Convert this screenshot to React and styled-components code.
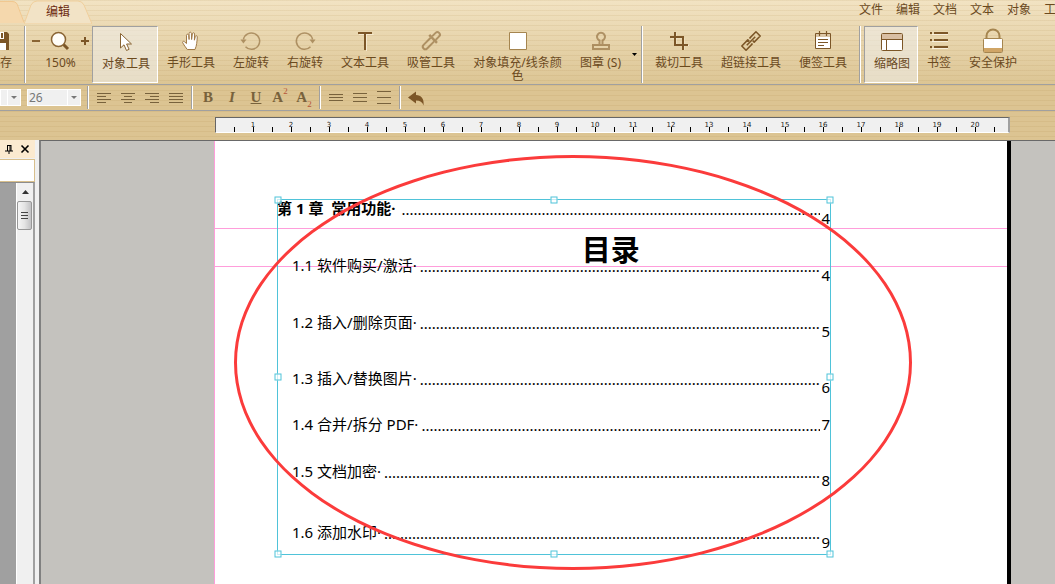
import React from "react";
import styled, { createGlobalStyle } from "styled-components";

const menus = ["文件", "编辑", "文档", "文本", "对象", "工具"];

const rulerMarks = Array.from({ length: 20 }, (_, i) => i + 1);

const dots = ".".repeat(400);

const contents = [
  { label: "第 1 章\u00a0 常用功能·", page: 4, height: 57, drop: 10, chapter: true },
  { label: "1.1 软件购买/激活·", page: 4, height: 57, drop: 10 },
  { label: "1.2 插入/删除页面·", page: 5, height: 56, drop: 9 },
  { label: "1.3 插入/替换图片·", page: 6, height: 46, drop: 9 },
  { label: "1.4 合并/拆分 PDF·", page: 7, height: 47, drop: 0 },
  { label: "1.5 文档加密·", page: 8, height: 61, drop: 9 },
  { label: "1.6 添加水印·", page: 9, height: 32, drop: 10 },
];

const alignments = [
  { name: "左对齐", d: "M0 .5h14M0 3.5h9M0 6.5h14M0 9.5h9" },
  { name: "居中", d: "M0 .5h14M3 3.5h8M0 6.5h14M3 9.5h8" },
  { name: "右对齐", d: "M0 .5h14M5 3.5h9M0 6.5h14M5 9.5h9" },
  { name: "两端对齐", d: "M0 .5h14M0 3.5h14M0 6.5h14M0 9.5h14" },
];

const spacings = [
  { name: "单倍行距", d: "M0 2.5h14M0 5.5h14M0 8.5h14" },
  { name: "1.5 倍行距", d: "M0 1.5h14M0 5.5h14M0 9.5h14" },
  { name: "双倍行距", d: "M0 -.5h14M0 5.5h14M0 11.5h14" },
];

const SaveIcon = () => (
  <Svg width="20" height="20">
    <path d="M1 1h16l2 2v16H1z" fill="#7c5627" />
    <path d="M5 1h9v7H5zM4 12h12v7H4z" fill="#fff" />
    <path d="M11 2h2v5h-2zM6 15h4v4H6z" fill="#7c5627" />
  </Svg>
);

const ZoomIcon = () => (
  <Svg width="20" height="20">
    <path d="M13 13l5 5" stroke="#7c5627" strokeWidth="3" />
    <circle cx="8.5" cy="8.5" r="7" fill="#fffdf8" stroke="#8a6534" strokeWidth="1.5" />
  </Svg>
);

const ArrowIcon = () => (
  <Svg width="20" height="20">
    <path
      d="M4.500 1.500v14.500l3.500-3.200 2.500 5.700 2.600-1.200-2.500-5.300h4.900z"
      fill="#fff"
      stroke="#8a6534"
    />
  </Svg>
);

const HandIcon = () => (
  <Svg width="20" height="20">
    <path
      d="M6.300 18.500C4.500 16.500 3 13.800 1.700 11.800c-.6-1.200.7-2 1.700-1.100L5.500 12.500V4.300c0-1.500 2-1.500 2.200 0l.4 4.200V2.300c0-1.600 2.200-1.600 2.300 0l.2 6.200.8-5.700c.2-1.500 2.200-1.300 2.200.2l-.2 6.200.9-3.700c.4-1.300 2-.9 2 .4-.3 4.300-.5 8.700-2.300 12.600z"
      fill="#fff"
      stroke="#a07a48"
    />
  </Svg>
);

const RotateIcon = ({ clockwise }) => (
  <Svg width="20" height="20" $faded>
    <g transform={clockwise ? undefined : "translate(20 0) scale(-1 1)"}>
      <path
        d="M17.600 8.500A8.200 8.200 0 1 0 15.500 15.800"
        fill="none"
        stroke="#8a6534"
        strokeWidth="1.500"
      />
      <path d="M14.500 8.500h6L17.600 12.500z" fill="#8a6534" />
    </g>
  </Svg>
);

const TextIcon = () => (
  <Svg width="20" height="20">
    <path d="M4 3.500h14.500M11.500 2v18" stroke="#f6ead0" />
    <path d="M3 2h14M10 2v17" stroke="#7c5627" strokeWidth="2" />
  </Svg>
);

const DropperIcon = () => (
  <Svg width="20" height="20" $faded>
    <g
      transform="rotate(45 10 10)"
      fill="none"
      stroke="#8a6534"
      strokeWidth="2"
      strokeLinejoin="round"
    >
      <path d="M7.500 6V1a2.500 2.500 0 0 1 5 0V6" />
      <path d="M4.500 7h11" strokeWidth="2.500" />
      <path d="M7.500 8v10a2.500 2.500 0 0 0 5 0V8" />
    </g>
  </Svg>
);

const FillIcon = () => (
  <Svg width="20" height="20">
    <path d="M1.500 1.500h17v17h-17z" fill="#fff" stroke="#a5854f" />
  </Svg>
);

const StampIcon = () => (
  <Svg width="20" height="20" $faded>
    <g fill="none" stroke="#8a6534" strokeWidth="2">
      <path d="M8.500 9.500a4 4 0 1 1 3 0V14h-3z" />
      <path d="M2 14h16v4H2z" />
    </g>
  </Svg>
);

const CropIcon = () => (
  <Svg width="20" height="20">
    <path d="M2 7h13v12M7 2v12.500h13" fill="none" stroke="#f6ead0" />
    <path d="M1 6h13v13M6 1v13h13" fill="none" stroke="#7c5627" strokeWidth="2" />
  </Svg>
);

const LinkIcon = () => (
  <Svg width="20" height="20">
    <g
      transform="rotate(-45 10 10)"
      fill="none"
      stroke="#7c5627"
      strokeWidth="1.600"
      strokeLinejoin="round"
    >
      <path d="M8.500 9V7H0v6h8.500V12" />
      <path d="M11.500 8V7H20v6h-8.500V11" />
      <path d="M4 10h12" />
    </g>
  </Svg>
);

const NoteIcon = () => (
  <Svg width="20" height="20">
    <path d="M2.500 2.500h15v15h-15z" fill="#fff" stroke="#7c5627" />
    <path d="M3 3h14v3H3z" fill="#dcc7a6" />
    <path
      d="M6.500 0v5M13.500 0v5M5 8.500h10M5 11.500h10M5 14.500h6"
      stroke="#7c5627"
      strokeWidth="1.200"
    />
  </Svg>
);

const ThumbnailIcon = () => (
  <Svg width="24" height="20">
    <rect x="1.500" y="1.500" width="21" height="17" rx="1" fill="#fff" stroke="#7c5627" />
    <path d="M2 2h20v5H2z" fill="#d9bfa3" />
    <path d="M2 7.500h20M6.500 7v11" stroke="#7c5627" />
  </Svg>
);

const BookmarkIcon = () => (
  <Svg width="20" height="20">
    <path d="M3 3.500h16M3 10.500h16M3 17.500h16" stroke="#f8efdc" />
    <path
      d="M1 2h2M5 2h14M1 9h2M5 9h14M1 16h2M5 16h14"
      stroke="#7c5627"
      strokeWidth="2"
    />
  </Svg>
);

const LockIcon = () => (
  <Svg width="22" height="26">
    <path d="M4.500 11V8a6.500 6.500 0 0 1 13 0v3" fill="none" stroke="#a5854f" strokeWidth="2" />
    <rect x="1.500" y="10.500" width="19" height="14" rx="1" fill="#fff" stroke="#a5854f" />
    <path d="M2 20h18v4H2z" fill="#d0a566" />
  </Svg>
);

const UndoIcon = () => (
  <Svg width="16" height="16">
    <path d="M0 7.500L8 1.500v3.500c5 0 8.500 4 7.500 10.500C14.500 12 12 10.500 8 10.500V13.500z" fill="#7c5627" />
  </Svg>
);

const Tool = ({ icon, label, active }) => (
  <ToolButton type="button" $active={active} aria-pressed={active}>
    <IconBox>{icon}</IconBox>
    <ToolLabel>{label}</ToolLabel>
  </ToolButton>
);

const App = () => {
  return (
    <Shell>
      <GlobalStyle />
      <Chrome>
        <TopRow>
          <Tabs>
            <TabEdge width="24" height="24" aria-hidden="true">
              <path d="M0 1h12q5 0 6 5l6 17H0z" fill="#f5d8ad" />
              <path d="M0 1.500h12q5 0 6 5l6 16" fill="none" stroke="#f1c890" />
            </TabEdge>
            <Tab type="button">
              <TabShape width="68" height="24" aria-hidden="true">
                <path
                  d="M0 24L7 5q2-4 6-4h41q4 0 6 4l8 19z"
                  fill="#f2e3c6"
                  stroke="#f0cf9c"
                />
              </TabShape>
              <TabText>编辑</TabText>
            </Tab>
          </Tabs>
          <Menu>
            {menus.map((name) => (
              <MenuItem key={name} type="button">
                {name}
              </MenuItem>
            ))}
          </Menu>
        </TopRow>

        <Toolbar>
          <SaveSlot>
            <Tool icon={<SaveIcon />} label="保存" />
          </SaveSlot>
          <Separator />
          <ZoomGroup>
            <ZoomStep type="button" aria-label="缩小">
              <Svg width="8" height="8">
                <path d="M0 4h8" stroke="#8a6534" strokeWidth="2" />
              </Svg>
            </ZoomStep>
            <ZoomValue>
              <IconBox>
                <ZoomIcon />
              </IconBox>
              <ToolLabel>150%</ToolLabel>
            </ZoomValue>
            <ZoomStep type="button" aria-label="放大">
              <Svg width="8" height="8">
                <path d="M0 4h8M4 0v8" stroke="#7c5627" strokeWidth="2" />
              </Svg>
            </ZoomStep>
          </ZoomGroup>
          <Tool icon={<ArrowIcon />} label="对象工具" active />
          <Tool icon={<HandIcon />} label="手形工具" />
          <Tool icon={<RotateIcon />} label="左旋转" />
          <Tool icon={<RotateIcon clockwise />} label="右旋转" />
          <Tool icon={<TextIcon />} label="文本工具" />
          <Tool icon={<DropperIcon />} label="吸管工具" />
          <Tool icon={<FillIcon />} label="对象填充/线条颜色" />
          <Tool icon={<StampIcon />} label="图章 (S)" />
          <DropButton type="button" aria-label="图章选项">
            <Svg width="5" height="3">
              <path d="M0 0h5L2.500 3z" fill="#000" />
            </Svg>
          </DropButton>
          <Separator />
          <Tool icon={<CropIcon />} label="裁切工具" />
          <Tool icon={<LinkIcon />} label="超链接工具" />
          <Tool icon={<NoteIcon />} label="便签工具" />
          <Separator />
          <Tool icon={<ThumbnailIcon />} label="缩略图" active />
          <Tool icon={<BookmarkIcon />} label="书签" />
          <Tool icon={<LockIcon />} label="安全保护" />
        </Toolbar>
      </Chrome>

      <FormatBar>
        <Combo $width="21px">
          <Select aria-label="字体" defaultValue="">
            <option value=""></option>
          </Select>
          <ComboArrow />
        </Combo>
        <Combo $width="54px">
          <Select aria-label="字号" defaultValue="26">
            <option>26</option>
          </Select>
          <ComboArrow />
        </Combo>
        <Separator />
        <Group>
          {alignments.map(({ name, d }) => (
            <FormatButton key={name} type="button" aria-label={name}>
              <Svg width="14" height="10">
                <path d={d} stroke="#78623c" />
              </Svg>
            </FormatButton>
          ))}
        </Group>
        <Separator />
        <Group>
          <FormatButton type="button">
            <b>B</b>
          </FormatButton>
          <FormatButton type="button">
            <i>I</i>
          </FormatButton>
          <FormatButton type="button">
            <u>U</u>
          </FormatButton>
          <FormatButton type="button">
            A<Super>2</Super>
          </FormatButton>
          <FormatButton type="button">
            A<Sub>2</Sub>
          </FormatButton>
        </Group>
        <Separator />
        <Group>
          {spacings.map(({ name, d }) => (
            <FormatButton key={name} type="button" aria-label={name}>
              <Svg width="14" height="12">
                <path d={d} stroke="#78623c" />
              </Svg>
            </FormatButton>
          ))}
        </Group>
        <Separator />
        <FormatButton type="button" aria-label="撤销">
          <UndoIcon />
        </FormatButton>
      </FormatBar>

      <RulerBar>
        <Ruler>
          <RulerScale>
            {rulerMarks.map((n) => (
              <RulerMark key={n}>{n}</RulerMark>
            ))}
          </RulerScale>
        </Ruler>
      </RulerBar>

      <Workspace>
        <SidePanel>
          <PanelHeader>
            <PanelButton type="button" aria-label="固定">
              <Svg width="8" height="9">
                <path d="M2 .5h4M2.500 0v6M5 0v6M6 0v6M0 6h8M4 6v3" stroke="#000" />
              </Svg>
            </PanelButton>
            <PanelButton type="button" aria-label="关闭">
              <Svg width="8" height="8">
                <path d="M.5.5l7 7M7.500.5l-7 7" stroke="#000" strokeWidth="1.600" />
              </Svg>
            </PanelButton>
          </PanelHeader>
          <PanelInput type="text" aria-label="查找" />
          <PanelBody>
            <ScrollTrack>
              <ScrollUp type="button" aria-label="向上滚动">
                <Svg width="7" height="4">
                  <path d="M0 4L3.500 0 7 4z" fill="#333" />
                </Svg>
              </ScrollUp>
              <ScrollThumb>
                <Svg width="7" height="9">
                  <path d="M0 1.500h7M0 4.500h7M0 7.500h7" stroke="#444" />
                </Svg>
              </ScrollThumb>
            </ScrollTrack>
          </PanelBody>
        </SidePanel>

        <Canvas>
          <Page>
            <Guide $top="87px" />
            <Guide $top="125px" />
            <Selection>
              {contents.map((item) => (
                <Entry key={item.label} $height={item.height} $chapter={item.chapter}>
                  <EntryLabel $chapter={item.chapter}>{item.label}</EntryLabel>
                  <Leader />
                  <PageNumber $drop={item.drop}>{item.page}</PageNumber>
                </Entry>
              ))}
              <Title>目录</Title>
              <Frame>
                <Handle $x="0%" $y="0%" />
                <Handle $x="50%" $y="0%" />
                <Handle $x="100%" $y="0%" />
                <Handle $x="0%" $y="50%" />
                <Handle $x="100%" $y="50%" />
                <Handle $x="0%" $y="100%" />
                <Handle $x="50%" $y="100%" />
                <Handle $x="100%" $y="100%" />
              </Frame>
            </Selection>
            <Ellipse />
          </Page>
        </Canvas>
      </Workspace>
    </Shell>
  );
};

const GlobalStyle = createGlobalStyle`
  * {
    box-sizing: border-box;
  }
  body {
    margin: 0;
    font-family: "Noto Sans", "Noto Sans CJK SC", sans-serif;
    font-size: 12px;
    color: #6b4a1e;
  }
  button {
    margin: 0;
    padding: 0;
    border: 0;
    background: none;
    color: inherit;
    font: inherit;
  }
`;

const Shell = styled.div`
  display: flex;
  flex-direction: column;
  height: 100vh;
  overflow: hidden;
`;

const stripes = `repeating-linear-gradient(rgba(160, 120, 50, 0.1) 0 1px, transparent 1px 5px)`;

const Chrome = styled.header`
  background: ${stripes}, linear-gradient(#f2e3c3, #dcc594);
`;

const TopRow = styled.div`
  display: flex;
  align-items: flex-start;
  justify-content: space-between;
  height: 24px;
`;

const Tabs = styled.div`
  display: flex;
`;

const TabEdge = styled.svg`
  display: block;
`;

const Tab = styled.button`
  display: grid;
  place-items: center;
  color: #6d2a10;
`;

const TabShape = styled.svg`
  display: block;
  grid-area: 1 / 1;
`;

const TabText = styled.span`
  grid-area: 1 / 1;
  line-height: 24px;
`;

const Menu = styled.nav`
  display: flex;
  gap: 13px;
  width: 196px;
  overflow: hidden;
`;

const MenuItem = styled.button`
  flex: none;
  line-height: 19px;
`;

const Toolbar = styled.div`
  display: flex;
  align-items: stretch;
  height: 60px;
  padding: 2px 0 1px;
`;

const Separator = styled.span`
  flex: none;
  width: 2px;
  margin: 0 3px;
  border-left: 1px solid #a0a0a0;
  border-right: 1px solid #fff;
`;

const SaveSlot = styled.div`
  display: flex;
  justify-content: center;
  width: 42px;
  margin: 0 0 0 -21px;
`;

const ToolButton = styled.button`
  display: flex;
  flex: none;
  flex-direction: column;
  align-items: center;
  max-width: 107px;
  padding: ${(props) => (props.$active ? "5px 7px 0 9px" : "5px 9px 0")};
  border: ${(props) => (props.$active ? "1px solid" : "0")};
  border-color: #a0a0a0 #fff #fff #a0a0a0;
  background: ${(props) => (props.$active ? "rgba(238, 236, 232, 0.6)" : "none")};
`;

const IconBox = styled.span`
  display: flex;
  align-items: center;
  justify-content: center;
  height: 20px;
`;

const ToolLabel = styled.span`
  margin-top: 5px;
  line-height: 13px;
  text-align: center;
`;

const Svg = styled.svg`
  display: block;
  flex: none;
  overflow: visible;
  opacity: ${(props) => (props.$faded ? 0.6 : 1)};
`;

const ZoomGroup = styled.div`
  display: flex;
  align-items: flex-start;
  justify-content: space-between;
  width: 63px;
  padding: 5px 3px 0;
`;

const ZoomStep = styled.button`
  display: flex;
  align-items: center;
  height: 20px;
`;

const ZoomValue = styled.div`
  display: flex;
  flex-direction: column;
  align-items: center;
`;

const DropButton = styled.button`
  display: flex;
  align-items: center;
  justify-content: center;
  width: 8px;
`;

const FormatBar = styled.div`
  display: flex;
  align-items: stretch;
  height: 27px;
  padding: 1px 0;
  border-top: 1px solid #a0a0a0;
  border-bottom: 1px solid #a0a0a0;
  background: ${stripes}, #dcc492;
`;

const Combo = styled.div`
  display: grid;
  grid-template-columns: 1fr 13px;
  flex: none;
  align-self: center;
  width: ${(props) => props.$width};
  height: 17px;
  margin-right: 6px;
  border: 1px solid #fff;
  background: #f0f0f0;

  &:nth-child(2) {
    margin-right: 3px;
  }
`;

const Select = styled.select`
  grid-area: 1 / 1 / 2 / 3;
  min-width: 0;
  padding: 0 0 0 1px;
  border: 0;
  background: none;
  color: #777;
  font: inherit;
  line-height: 15px;
  appearance: none;
`;

const ComboArrow = styled.span`
  display: grid;
  grid-area: 1 / 2;
  place-items: center;
  border-left: 1px solid #fff;
  pointer-events: none;

  &::after {
    content: "";
    border: 3px solid transparent;
    border-top-color: #777;
    border-bottom: 0;
  }
`;

const Group = styled.div`
  display: flex;
`;

const FormatButton = styled.button`
  display: flex;
  align-items: center;
  justify-content: center;
  width: 24px;
  color: #78623c;
  font-family: "Liberation Serif", serif;
  font-size: 15px;
  font-weight: bold;
`;

const Super = styled.sup`
  align-self: flex-start;
  color: #b5543a;
  font-size: 9px;
  font-weight: normal;
`;

const Sub = styled.sub`
  align-self: flex-end;
  color: #b5543a;
  font-size: 9px;
  font-weight: normal;
`;

const RulerBar = styled.div`
  padding: 6px 45px 7px 215px;
  background: ${stripes}, #dcc492;
`;

const Ruler = styled.div`
  height: 16px;
  padding-left: 18px;
  overflow: hidden;
  border: 1px solid #666;
  border-right: 2px solid #a0a0a0;
  border-bottom-color: #fff;
  background: #f0f0f0;
`;

const RulerScale = styled.div`
  display: flex;
  width: 761px;
  height: 14px;
  background: linear-gradient(90deg, #000 1px, transparent 1px) 0 100% / 19px 5px
    repeat-x;
`;

const RulerMark = styled.span`
  width: 38px;
  color: #222;
  font-family: "DejaVu Sans", sans-serif;
  font-size: 7px;
  line-height: 14px;
  text-align: center;
`;

const Workspace = styled.div`
  display: flex;
  flex: 1;
  min-height: 0;
  background: #f0f0f0;
`;

const SidePanel = styled.aside`
  display: flex;
  flex-direction: column;
  width: 35px;
  margin-right: 4px;
`;

const PanelHeader = styled.div`
  display: flex;
  gap: 8px;
  align-items: center;
  justify-content: flex-end;
  height: 18px;
  padding-right: 6px;
  background: #fbead0;
`;

const PanelButton = styled.button`
  display: flex;
  align-items: center;
  height: 18px;
`;

const PanelInput = styled.input`
  width: 35px;
  height: 23px;
  margin-top: 1px;
  border: 1px solid #d8bf8c;
  border-left: 0;
  background: #fff;
`;

const PanelBody = styled.div`
  display: flex;
  flex: 1;
  justify-content: flex-end;
  border-top: 1px solid #8c8c8c;
  border-right: 2px solid #a0a0a0;
  background: #a0a0a0;
`;

const ScrollTrack = styled.div`
  width: 17px;
  border-left: 1px solid #fff;
  background: #f0f0f0;
`;

const ScrollUp = styled.button`
  display: flex;
  align-items: center;
  justify-content: center;
  width: 16px;
  height: 18px;
`;

const ScrollThumb = styled.div`
  display: flex;
  align-items: center;
  justify-content: center;
  width: 15px;
  height: 29px;
  border: 1px solid #979797;
  border-radius: 2px;
  background: linear-gradient(90deg, #f5f5f5, #e4e4e4 50%, #c2c2c4);
`;

const Canvas = styled.main`
  display: flex;
  flex: 1;
  min-width: 0;
  padding: 0 44px 0 173px;
  overflow: hidden;
  border-top: 1px solid #696969;
  border-left: 2px solid #808080;
  background: #c4c2be;
`;

const Page = styled.article`
  position: relative;
  flex: 1;
  min-width: 0;
  padding: 58px 176px 29px 62px;
  border-right: 4px solid #000;
  border-left: 1px solid #ff9ddb;
  background: #fff;
  color: #000;
`;

const Guide = styled.div`
  position: absolute;
  top: ${(props) => props.$top};
  right: 0;
  left: 0;
  height: 1px;
  background: #ff9ddb;
`;

const Selection = styled.section`
  position: relative;
`;

const Entry = styled.div`
  display: flex;
  align-items: flex-start;
  height: ${(props) => props.$height}px;
  padding: 0 1px 0 ${(props) => (props.$chapter ? "0" : "15px")};
  font-size: 15px;
  line-height: 18px;
`;

const EntryLabel = styled.span`
  flex: none;
  margin-right: ${(props) => (props.$chapter ? "6px" : "3px")};
  font-weight: ${(props) => (props.$chapter ? "bold" : "normal")};
`;

const Leader = styled.span`
  flex: 1;
  min-width: 0;
  padding-top: 2px;
  overflow: hidden;
  font-family: "Liberation Serif", serif;
  font-size: 16px;
  white-space: nowrap;

  &::before {
    content: "${dots}";
  }
`;

const PageNumber = styled.span`
  padding-top: ${(props) => props.$drop}px;
  margin-left: 1px;
`;

const Title = styled.h1`
  position: absolute;
  top: 34px;
  left: 55%;
  margin: 0;
  font-size: 29px;
  line-height: 34px;
`;

const Frame = styled.div`
  position: absolute;
  inset: 0;
  border: 1px solid #4fc3d9;
`;

const Handle = styled.span`
  position: absolute;
  top: ${(props) => props.$y};
  left: ${(props) => props.$x};
  width: 7px;
  height: 7px;
  border: 1px solid #4fc3d9;
  background: rgba(255, 255, 255, 0.7);
  transform: translate(-50%, -50%);
`;

const Ellipse = styled.div`
  position: absolute;
  top: 14px;
  left: 19px;
  width: 678px;
  height: 415px;
  border: 3px solid #fb3b3b;
  border-radius: 50%;
`;

export default App;
